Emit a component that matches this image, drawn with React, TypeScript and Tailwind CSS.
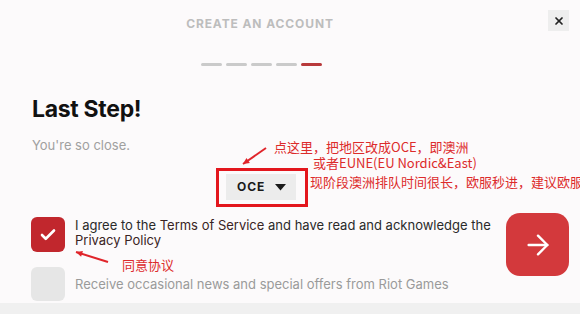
import { ArrowRight, Check, X } from "lucide-react";

const latin = "font-['Inter','Noto_Sans_CJK_SC',sans-serif]";
const cjk = "font-['Microsoft_YaHei','Noto_Sans_CJK_SC',sans-serif]";

function RedArrow({ x1, y1, x2, y2 }: { x1: number; y1: number; x2: number; y2: number }) {
  // draws a thin red pointer ending at (x2, y2)
  const ang = Math.atan2(y2 - y1, x2 - x1);
  const h = 7;
  const a1 = ang + Math.PI - 0.45;
  const a2 = ang + Math.PI + 0.45;
  return (
    <svg className="pointer-events-none absolute left-0 top-0" width={580} height={314}>
      <line x1={x1} y1={y1} x2={x2} y2={y2} stroke="#e0242a" strokeWidth={2} />
      <polygon
        points={`${x2},${y2} ${x2 + h * Math.cos(a1)},${y2 + h * Math.sin(a1)} ${x2 + h * Math.cos(a2)},${y2 + h * Math.sin(a2)}`}
        fill="#e0242a"
      />
    </svg>
  );
}

export default function App() {
  return (
    <div className={`relative flex h-[314px] w-[580px] flex-col overflow-hidden bg-[#fcfafb] ${latin}`}>
      <div className="w-[520px]">
        <div className="flex h-[48px] items-center justify-center">
          <h1 className="text-[12px] font-bold tracking-[0.9px] text-[#bdbdbd]">CREATE AN ACCOUNT</h1>
        </div>

        <div className="mt-[15px] flex justify-center gap-[4px] pl-[2px]">
          <span className="h-[3px] w-[21px] rounded-full bg-[#cacaca]" />
          <span className="h-[3px] w-[21px] rounded-full bg-[#cacaca]" />
          <span className="h-[3px] w-[21px] rounded-full bg-[#cacaca]" />
          <span className="h-[3px] w-[21px] rounded-full bg-[#cacaca]" />
          <span className="h-[3px] w-[21px] rounded-full bg-[#b8393b]" />
        </div>
      </div>

      <button className="absolute right-[11px] top-[10px] flex h-[21px] w-[21px] items-center justify-center bg-[#eeeeee] text-[#222]">
        <X size={12} strokeWidth={3.5} />
      </button>

      <div className="pl-[32px]">
        <h2 className="mt-[29px] text-[23px] font-bold leading-[28px] tracking-[-0.3px] text-[#111]">Last Step!</h2>
        <p className="mt-[13px] text-[13px] leading-[18px] text-[#a0a0a0]">You're so close.</p>
      </div>

      <div className="mt-[14px] flex w-[524px] justify-center">
        <div className="h-[39px] w-[92px] border-[3px] border-[#e3161d] pl-[7px] pt-[3px]">
          <div className="flex h-[26px] w-[70px] items-center gap-[10px] bg-[#ececec] pl-[11px]">
            <span className="text-[12px] font-bold tracking-[1px] text-[#1a1a1a]">OCE</span>
            <svg width="11" height="7" viewBox="0 0 11 7">
              <polygon points="0,0 11,0 5.5,6.5" fill="#1a1a1a" />
            </svg>
          </div>
        </div>
      </div>

      <div className="mt-[6px] flex flex-1 items-start">
        <div className="flex-1 pl-[31px] pt-[4px]">
          <div className="flex items-start gap-[10px]">
            <span className="flex h-[35px] w-[34px] shrink-0 items-center justify-center rounded-[6px] bg-[#c1272d] text-white">
              <Check size={18} strokeWidth={3.5} />
            </span>
            <p className="mt-[1px] text-[13px] leading-[15px] text-[#2a2a2a]">
              I agree to the <span className="text-[#3a2424]">Terms of Service</span> and have read and acknowledge the{" "}
              <span className="text-[#3a2424]">Privacy Policy</span>
            </p>
          </div>
          <div className="mt-[15px] flex items-center gap-[10px]">
            <span className="h-[34px] w-[34px] shrink-0 rounded-[6px] bg-[#e6e6e6]" />
            <p className="text-[13px] leading-[15px] text-[#9a9a9a]">
              Receive occasional news and special offers from Riot Games
            </p>
          </div>
        </div>
        <button className="ml-[10px] mr-[11px] flex h-[63px] w-[63px] shrink-0 items-center justify-center rounded-[14px] bg-[#d3393c] text-white">
          <ArrowRight size={32} strokeWidth={1.8} />
        </button>
      </div>

      <div className="h-[11px] bg-[#f0f0f0]" />

      {/* red annotations */}
      <RedArrow x1={266} y1={148} x2={243} y2={164} />
      <RedArrow x1={108} y1={262} x2={76} y2={252} />
      <div className={`absolute left-[274px] top-[140px] whitespace-nowrap text-[13px] leading-[14px] text-[#dc2b2b] ${cjk}`}>
        点这里，把地区改成OCE，即澳洲
      </div>
      <div className={`absolute left-[313px] top-[156px] whitespace-nowrap text-[13px] leading-[14px] text-[#dc2b2b] ${cjk}`}>
        或者EUNE(EU Nordic&amp;East)
      </div>
      <div className={`absolute left-[310px] top-[175px] whitespace-nowrap text-[13px] leading-[14px] text-[#dc2b2b] ${cjk}`}>
        现阶段澳洲排队时间很长，欧服秒进，建议欧服
      </div>
      <div className={`absolute left-[122px] top-[258px] whitespace-nowrap text-[13px] leading-[14px] text-[#dc2b2b] ${cjk}`}>
        同意协议
      </div>
    </div>
  );
}
